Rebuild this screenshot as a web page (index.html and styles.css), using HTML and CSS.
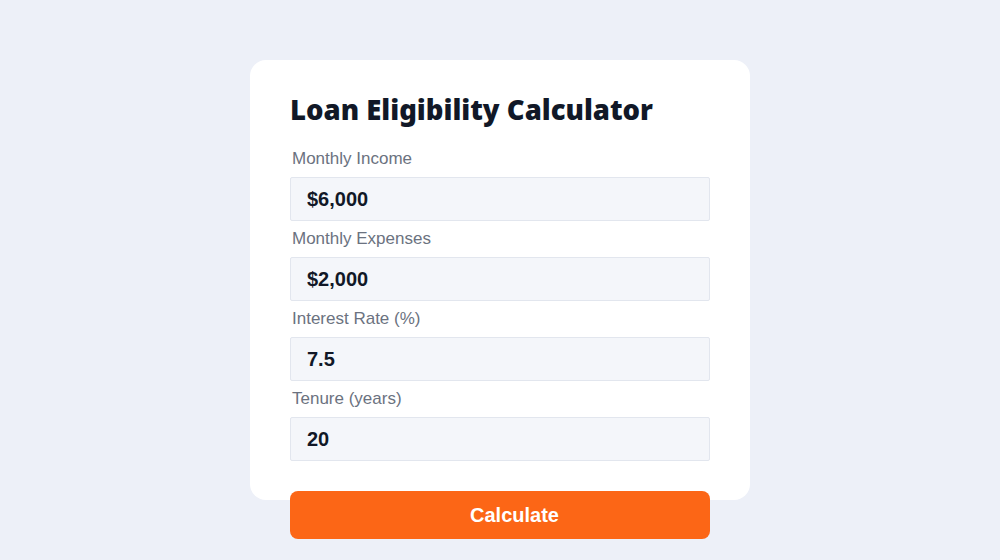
FILE: index.html
```html
<!DOCTYPE html>
<html lang="en">
<head>
  <meta charset="UTF-8">
  <title>Loan Eligibility Calculator</title>
  <link rel="stylesheet" href="styles.css">
</head>
<body>

  <div class="wrap">
    <div class="card">
      <h1 class="title">Loan Eligibility Calculator</h1>

      <div class="field">
        <label for="income">Monthly Income</label>
        <input type="text" id="income" value="$6,000">
      </div>

      <div class="field">
        <label for="expenses">Monthly Expenses</label>
        <input type="text" id="expenses" value="$2,000">
      </div>

      <div class="field">
        <label for="rate">Interest Rate (%)</label>
        <input type="text" id="rate" value="7.5">
      </div>

      <div class="field">
        <label for="tenure">Tenure (years)</label>
        <input type="text" id="tenure" value="20">
      </div>
    </div>

    <button class="calc-btn">Calculate</button>
  </div>

</body>
</html>
```

FILE: styles.css
```css
body {
  margin: 0;
  background-color: #edf0f8;
  font-family: "Liberation Sans", Arial, sans-serif;
}
.wrap {
  width: 500px;
  margin: 60px auto 0;
}
.card {
  box-sizing: border-box;
  height: 440px;
  background-color: #fff;
  border-radius: 16px;
  padding: 33px 40px 0;
}
.title {
  margin: 0 0 22px;
  font-family: "Noto Sans", sans-serif;
  font-size: 27.5px;
  line-height: 34px;
  font-weight: 900;
  color: #111827;
}
.field {
  display: flex;
  flex-direction: column;
  margin-bottom: 8px;
}
.field label {
  font-size: 17px;
  line-height: 20px;
  color: #6b7280;
  padding-left: 2px;
  margin-bottom: 8px;
}
.field input {
  box-sizing: border-box;
  height: 44px;
  padding: 0 16px;
  font-family: "Liberation Sans", Arial, sans-serif;
  font-size: 20px;
  font-weight: bold;
  color: #111827;
  background-color: #f4f6fa;
  border: 1px solid #e2e6ee;
  border-radius: 2px;
  outline: none;
}
/* the button sits half over the card's bottom edge */
.calc-btn {
  display: block;
  position: relative;
  width: 420px;
  height: 48px;
  margin: -9px auto 0;
  padding: 0 0 0 29px;
  border: none;
  border-radius: 8px;
  background-color: #fc6616;
  color: #fff;
  font-family: "Liberation Sans", Arial, sans-serif;
  font-size: 20px;
  font-weight: bold;
  cursor: pointer;
}
```
